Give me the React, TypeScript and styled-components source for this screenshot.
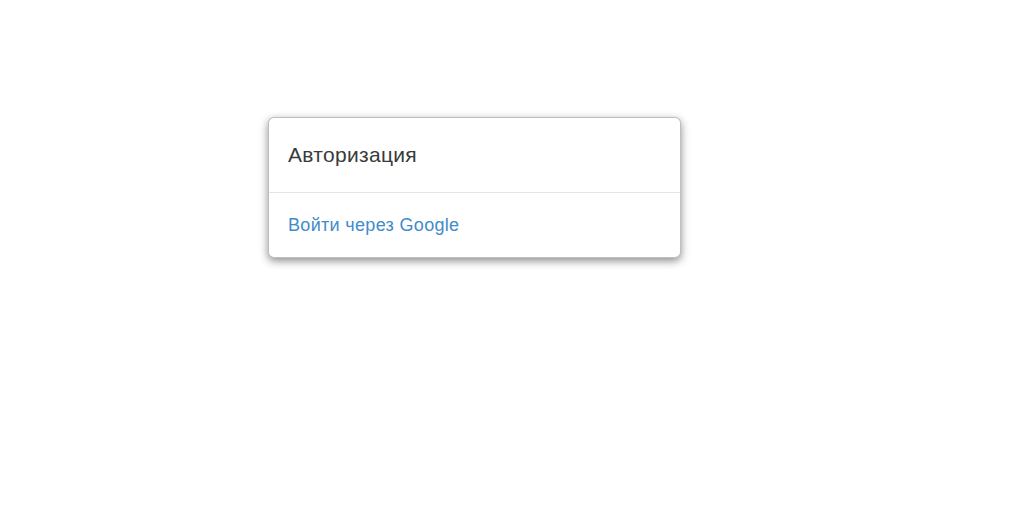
import React from "react";
import styled, { createGlobalStyle } from "styled-components";

const Global = createGlobalStyle`
  html, body { margin: 0; padding: 0; background: #fff; }
  body { font-family: "Liberation Sans", Arial, sans-serif; }
`;

const Page = styled.div`
  width: 1024px;
  height: 508px;
  padding: 117px 0 0 268px;
  box-sizing: border-box;
`;

const Modal = styled.div`
  width: 413px;
  box-sizing: border-box;
  background: #fff;
  border: 1px solid rgba(0, 0, 0, 0.25);
  border-radius: 6px;
  box-shadow: 0 3px 8px rgba(0, 0, 0, 0.45);
`;

const Header = styled.div`
  padding: 0 19px;
  border-bottom: 1px solid #e5e5e5;
  height: 75px;
  box-sizing: border-box;
  display: flex;
  align-items: center;
`;

const Title = styled.h4`
  margin: 0;
  font-size: 21px;
  letter-spacing: 0.3px;
  font-weight: normal;
  color: #3a3a3a;
`;

const Body = styled.div`
  padding: 0 19px;
  height: 64px;
  box-sizing: border-box;
  display: flex;
  align-items: center;
`;

const Link = styled.a`
  font-size: 18px;
  letter-spacing: 0.32px;
  color: #428bca;
  text-decoration: none;
`;

export default function App() {
  return (
    <>
      <Global />
      <Page>
        <Modal>
          <Header>
            <Title>Авторизация</Title>
          </Header>
          <Body>
            <Link href="#">Войти через Google</Link>
          </Body>
        </Modal>
      </Page>
    </>
  );
}
